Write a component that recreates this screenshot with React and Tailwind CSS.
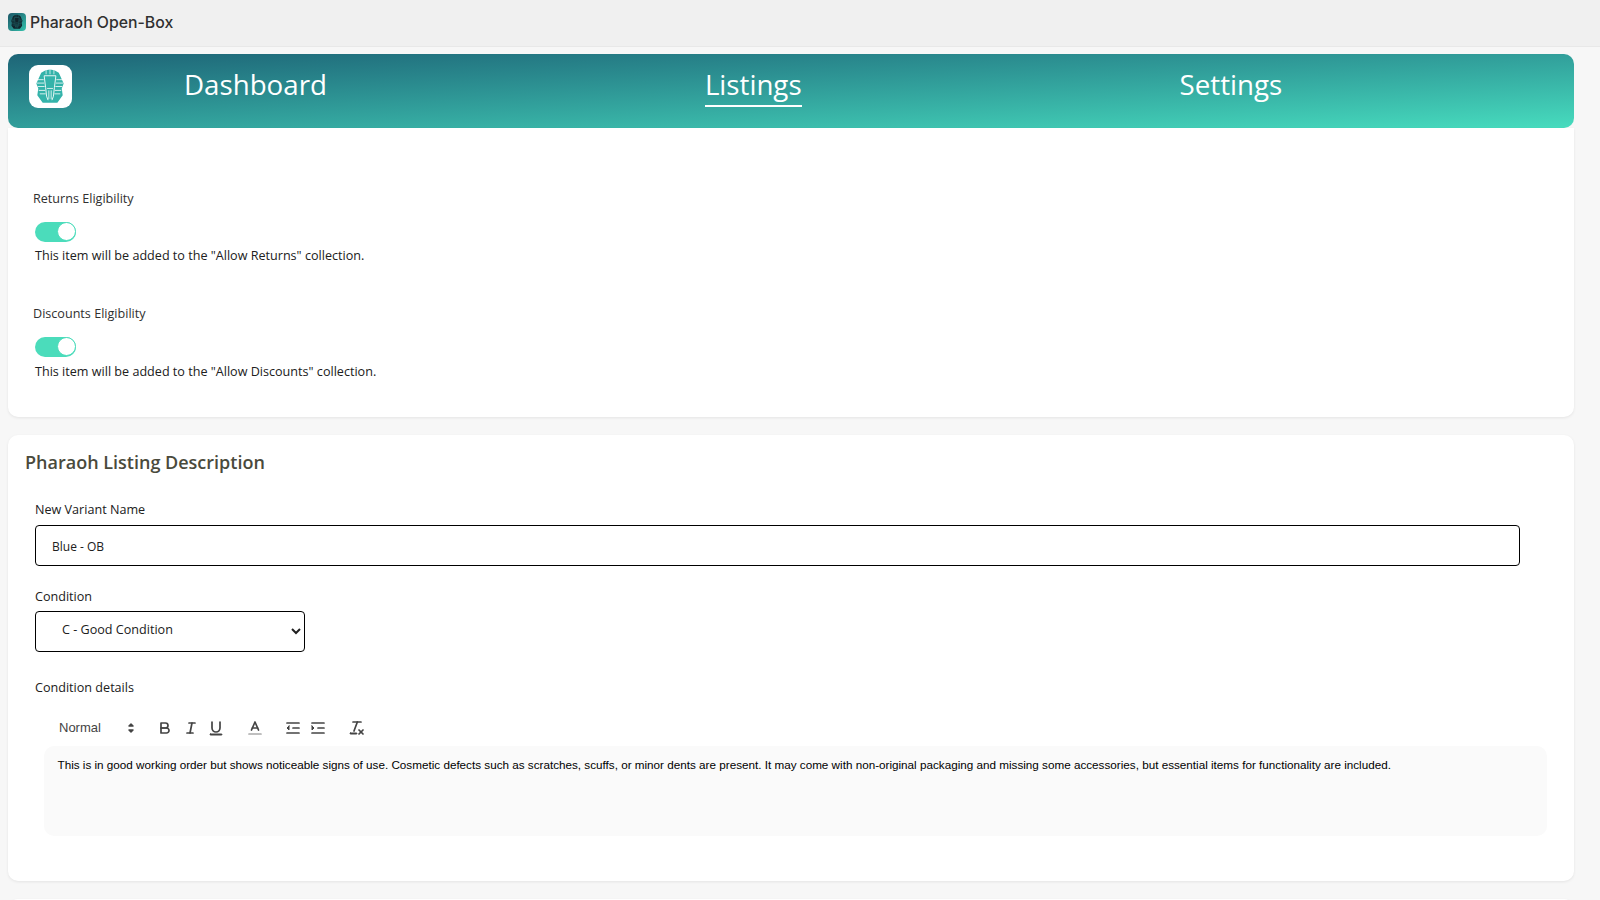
const PharaohMark = ({ className, color, gap }) => (
  <svg viewBox="0 0 44 44" className={className}>
    <path d="M12.5 8 Q21.5 1 30.5 8 L35.5 19 L33.5 24 L34.5 31 L29 38.5 H14 L8.5 31 L9.5 24 L7.5 19 Z" fill={color} />
    <path d="M15.5 11 L17 23 L18 32 L19.5 36 M27.5 11 L26 23 L25 32 L23.5 36 M15.5 11 H27.5" stroke={gap} strokeWidth="0.9" fill="none" />
    <path d="M18.5 24 H24.5 M20.3 26 V35 M22.7 26 V35" stroke={gap} strokeWidth="0.8" fill="none" />
    <path d="M17.5 4.5 V9.5 M21.5 3.5 V9.5 M25.5 4.5 V9.5" stroke={gap} strokeWidth="0.7" />
    <path d="M8 15 H15 M8 18.5 H15.5 M9 22 H16 M10 26 H16.5 M11 29.5 H17 M28 15 H35 M27.5 18.5 H35 M27 22 H34 M26.5 26 H33 M26 29.5 H32" stroke={gap} strokeWidth="0.8" />
  </svg>
);

const Toggle = () => (
  <div className="relative h-5 w-[41px] rounded-full bg-[#4bdcbb]">
    <span className="absolute right-0 top-0 size-[19px] rounded-full border border-[#4bdcbb] bg-white"></span>
  </div>
);

const ToolIcon = ({ className, children }) => (
  <svg
    viewBox="0 0 18 18"
    className={`size-[18px] shrink-0 ${className || ""}`}
    fill="none"
    stroke="#444"
    strokeWidth="1.7"
    strokeLinecap="round"
    strokeLinejoin="round"
  >
    {children}
  </svg>
);

const EligibilityBlock = ({ title, description, descriptionClass }) => (
  <div>
    <p className="pl-[25px] text-[12.6px] leading-[18px] text-[#303030]">{title}</p>
    <div className="mt-[14px] pl-[27px]">
      <Toggle />
    </div>
    <p className={`pl-[27px] text-[12.6px] leading-[18px] text-[#202020] ${descriptionClass}`}>{description}</p>
  </div>
);

const App = () => {
  const navItems = ["Dashboard", "Listings", "Settings"];

  return (
    <div className="flex h-screen flex-col overflow-hidden bg-[#f7f7f7] font-['Open_Sans',sans-serif]">
      <div className="flex h-[47px] shrink-0 items-center gap-1 border-b border-[#e8e8e8] bg-[#f0f0f0] pl-2">
        <div className="mb-[2px] size-[18px] overflow-hidden rounded-[4px] bg-linear-to-br from-[#1b5566] to-[#35c4ad]">
          <PharaohMark className="size-[18px]" color="#10242c" gap="#2a8f8f" />
        </div>
        <span className="font-['Inter',sans-serif] text-[15.8px] font-medium text-[#303030]">Pharaoh Open-Box</span>
      </div>

      <div className="ml-2 mt-[7px] w-[1566px] shrink-0">
        <div className="flex h-[74px] items-center rounded-[10px] bg-linear-to-br from-[#1e6577] to-[#47dcbe] pl-[20.5px]">
          <div className="mb-[9px] flex size-[43px] items-center justify-center rounded-[9px] bg-white">
            <PharaohMark className="size-[43px]" color="#34b3aa" gap="#ffffff" />
          </div>
          <nav className="mb-[11px] ml-[112.5px] flex items-center gap-[378px]">
            {navItems.map((item) => (
              <span
                key={item}
                className={`border-b-2 text-[27.7px] leading-[41px] text-white ${
                  item === "Listings" ? "border-white" : "border-transparent"
                }`}
              >
                {item}
              </span>
            ))}
          </nav>
        </div>

        <div className="flex h-[289px] flex-col gap-[40px] rounded-b-[10px] bg-white pt-[62px] shadow-[0_1px_3px_rgba(0,0,0,0.08)]">
          <EligibilityBlock
            title="Returns Eligibility"
            description={'This item will be added to the "Allow Returns" collection.'}
            descriptionClass="mt-[5px]"
          />
          <EligibilityBlock
            title="Discounts Eligibility"
            description={'This item will be added to the "Allow Discounts" collection.'}
            descriptionClass="mt-[6px]"
          />
        </div>

        <div className="mt-[18px] h-[446px] rounded-[10px] bg-white pt-[14px] shadow-[0_1px_3px_rgba(0,0,0,0.08)]">
          <h2 className="pl-[17px] text-lg leading-[26px] font-semibold text-[#4a4a3c]">Pharaoh Listing Description</h2>

          <div className="pl-[27px]">
            <label className="mt-[26px] block text-[12.6px] leading-[18px] text-[#202020]">New Variant Name</label>
            <input
              defaultValue="Blue - OB"
              className="mt-[6px] block h-[41px] w-[1485px] rounded-[4px] border border-black bg-white pl-4 pt-[2px] text-xs text-[#202020]"
            />

            <label className="mt-[22px] block text-[12.6px] leading-[18px] text-[#202020]">Condition</label>
            <select
              defaultValue="C"
              className="mt-[5px] block h-[41px] w-[270px] rounded-[4px] border border-black bg-white pb-[4px] pl-[22px] text-[12.6px] text-[#202020]"
            >
              <option value="C">C - Good Condition</option>
            </select>

            <label className="mt-[27px] block text-[12.6px] leading-[18px] text-[#202020]">Condition details</label>
          </div>

          <div className="mt-[22px] flex h-[18px] items-center pl-[44px] font-['Liberation_Sans',sans-serif]">
            <div className="flex w-[99px] items-center pl-[7px]">
              <span className="w-[63px] text-[13px] text-[#444]">Normal</span>
              <ToolIcon>
                <polygon points="7 11 9 13 11 11 7 11" fill="#444" strokeWidth="1.5" />
                <polygon points="7 7 9 5 11 7 7 7" fill="#444" strokeWidth="1.5" />
              </ToolIcon>
            </div>
            <ToolIcon className="ml-[5px]">
              <path d="M5,4H9.5A2.5,2.5,0,0,1,12,6.5v0A2.5,2.5,0,0,1,9.5,9H5A0,0,0,0,1,5,9V4A0,0,0,0,1,5,4Z" />
              <path d="M5,9h5.5A2.5,2.5,0,0,1,13,11.5v0A2.5,2.5,0,0,1,10.5,14H5a0,0,0,0,1,0,0V9A0,0,0,0,1,5,9Z" />
            </ToolIcon>
            <ToolIcon className="ml-[8px]">
              <line x1="7" x2="13" y1="4" y2="4" />
              <line x1="5" x2="11" y1="14" y2="14" />
              <line x1="8" x2="10" y1="14" y2="4" />
            </ToolIcon>
            <ToolIcon className="ml-[7px]">
              <path d="M5,3V9a4.012,4.012,0,0,0,4,4H9a4.012,4.012,0,0,0,4-4V3" />
              <rect x="3" y="15" width="12" height="1" rx=".5" ry=".5" fill="#444" strokeWidth="1" />
            </ToolIcon>
            <ToolIcon className="ml-[21px]">
              <line x1="3" x2="15" y1="15" y2="15" stroke="#aaa" />
              <polyline points="5.5 11 9 3 12.5 11" />
              <line x1="11.63" x2="6.38" y1="9" y2="9" />
            </ToolIcon>
            <ToolIcon className="ml-[20px]">
              <line x1="3" x2="15" y1="14" y2="14" />
              <line x1="3" x2="15" y1="4" y2="4" />
              <line x1="9" x2="15" y1="9" y2="9" />
              <polygon points="5 7 5 11 3 9 5 7" fill="#444" strokeWidth="1" />
            </ToolIcon>
            <ToolIcon className="ml-[7px]">
              <line x1="3" x2="15" y1="14" y2="14" />
              <line x1="3" x2="15" y1="4" y2="4" />
              <line x1="9" x2="15" y1="9" y2="9" />
              <polygon points="3 7 3 11 5 9 3 7" fill="#444" strokeWidth="1" />
            </ToolIcon>
            <ToolIcon className="ml-[21px]">
              <line x1="5" x2="13" y1="3" y2="3" />
              <line x1="6" x2="9.35" y1="12" y2="3" />
              <line x1="11" x2="15" y1="11" y2="15" />
              <line x1="15" x2="11" y1="11" y2="15" />
              <rect x="2" y="14" width="7" height="1" rx=".5" ry=".5" fill="#444" strokeWidth="1" />
            </ToolIcon>
          </div>

          <div className="ml-9 mt-[9px] h-[90px] w-[1503px] rounded-[10px] bg-[#fafafa] px-[13.5px] py-[10px] font-['Liberation_Sans',sans-serif] text-[11.7px] leading-[18px] text-black">
            This is in good working order but shows noticeable signs of use. Cosmetic defects such as scratches, scuffs, or minor dents are present. It may come with non-original packaging and missing some accessories, but essential items for functionality are included.
          </div>
        </div>

        <div className="mt-[18px] h-[40px] rounded-[10px] bg-white shadow-[0_1px_3px_rgba(0,0,0,0.08)]"></div>
      </div>
    </div>
  );
};

export default App;
